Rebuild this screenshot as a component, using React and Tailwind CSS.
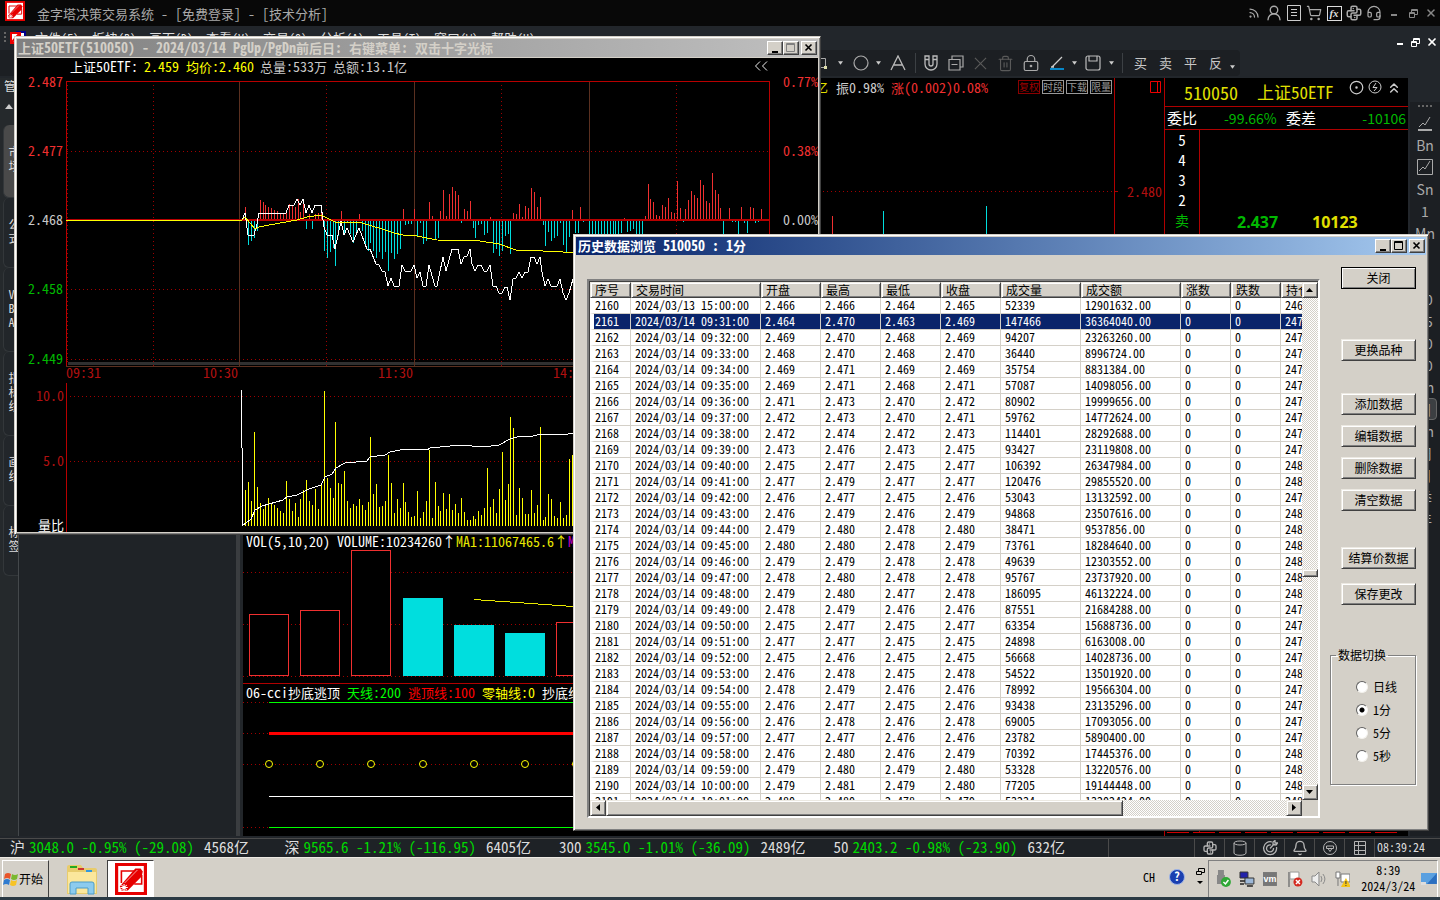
import { Rss, ShoppingCart, Headset, UserRound, CopyMinus, X, Trash2, LockKeyhole, Save, Bell, ChevronsUp, CircleDot } from 'lucide-react';
import { TbBrandPython } from 'react-icons/tb';

const MENUS = ['文件(F)', '板块(B)', '画面(D)', '查看(V)', '交易(O)', '分析(A)', '工具(T)', '窗口(W)', '帮助(H)'];

const SIDE_TABS = [
  { label: '市场', cls: 'h-[73px] bg-[#4a4a4a]' },
  { label: '公式', cls: 'h-[70px] bg-[#22262a]' },
  { label: 'VBA', cls: 'h-[84px] bg-[#22262a]' },
  { label: '指标线', cls: 'h-[84px] bg-[#22262a]' },
  { label: '画线', cls: 'h-[70px] bg-[#22262a]' },
  { label: '标签', cls: 'h-[70px] bg-[#22262a]' },
];

const INDEXES = [
  { name: '沪', value: '3048.0 -0.95% (-29.08)', amount: '4568亿' },
  { name: '深', value: '9565.6 -1.21% (-116.95)', amount: '6405亿' },
  { name: '300', value: '3545.0 -1.01% (-36.09)', amount: '2489亿' },
  { name: '50', value: '2403.2 -0.98% (-23.90)', amount: '632亿' },
];

const COLUMNS = [
  { label: '序号', width: 'w-[41px]' },
  { label: '交易时间', width: 'w-[130px]' },
  { label: '开盘', width: 'w-[60px]' },
  { label: '最高', width: 'w-[60px]' },
  { label: '最低', width: 'w-[60px]' },
  { label: '收盘', width: 'w-[60px]' },
  { label: '成交量', width: 'w-[80px]' },
  { label: '成交额', width: 'w-[100px]' },
  { label: '涨数', width: 'w-[50px]' },
  { label: '跌数', width: 'w-[50px]' },
  { label: '持仓', width: 'w-[80px]' },
];

// time, open, high, low, close, volume, amount, position
const BARS = [
  ['2024/03/13 15:00:00', '2.466', '2.466', '2.464', '2.465', 52339, 12901632, 246],
  ['2024/03/14 09:31:00', '2.464', '2.470', '2.463', '2.469', 147466, 36364040, 247],
  ['2024/03/14 09:32:00', '2.469', '2.470', '2.468', '2.469', 94207, 23263260, 247],
  ['2024/03/14 09:33:00', '2.468', '2.470', '2.468', '2.470', 36440, 8996724, 247],
  ['2024/03/14 09:34:00', '2.469', '2.471', '2.469', '2.469', 35754, 8831384, 247],
  ['2024/03/14 09:35:00', '2.469', '2.471', '2.468', '2.471', 57087, 14098056, 247],
  ['2024/03/14 09:36:00', '2.471', '2.473', '2.470', '2.472', 80902, 19999656, 247],
  ['2024/03/14 09:37:00', '2.472', '2.473', '2.470', '2.471', 59762, 14772624, 247],
  ['2024/03/14 09:38:00', '2.472', '2.474', '2.472', '2.473', 114401, 28292688, 247],
  ['2024/03/14 09:39:00', '2.473', '2.476', '2.473', '2.475', 93427, 23119808, 247],
  ['2024/03/14 09:40:00', '2.475', '2.477', '2.475', '2.477', 106392, 26347984, 248],
  ['2024/03/14 09:41:00', '2.477', '2.479', '2.477', '2.477', 120476, 29855520, 248],
  ['2024/03/14 09:42:00', '2.476', '2.477', '2.475', '2.476', 53043, 13132592, 247],
  ['2024/03/14 09:43:00', '2.476', '2.479', '2.476', '2.479', 94868, 23507616, 248],
  ['2024/03/14 09:44:00', '2.479', '2.480', '2.478', '2.480', 38471, 9537856, 248],
  ['2024/03/14 09:45:00', '2.480', '2.480', '2.478', '2.479', 73761, 18284640, 248],
  ['2024/03/14 09:46:00', '2.479', '2.479', '2.478', '2.478', 49639, 12303552, 248],
  ['2024/03/14 09:47:00', '2.478', '2.480', '2.478', '2.478', 95767, 23737920, 248],
  ['2024/03/14 09:48:00', '2.479', '2.480', '2.477', '2.478', 186095, 46132224, 248],
  ['2024/03/14 09:49:00', '2.478', '2.479', '2.476', '2.476', 87551, 21684288, 247],
  ['2024/03/14 09:50:00', '2.475', '2.477', '2.475', '2.477', 63354, 15688736, 247],
  ['2024/03/14 09:51:00', '2.477', '2.477', '2.475', '2.475', 24898, 6163008, 247],
  ['2024/03/14 09:52:00', '2.475', '2.476', '2.475', '2.475', 56668, 14028736, 247],
  ['2024/03/14 09:53:00', '2.476', '2.478', '2.475', '2.478', 54522, 13501920, 248],
  ['2024/03/14 09:54:00', '2.478', '2.479', '2.476', '2.476', 78992, 19566304, 247],
  ['2024/03/14 09:55:00', '2.476', '2.477', '2.475', '2.476', 93438, 23135296, 247],
  ['2024/03/14 09:56:00', '2.476', '2.478', '2.476', '2.478', 69005, 17093056, 247],
  ['2024/03/14 09:57:00', '2.477', '2.477', '2.476', '2.476', 23782, 5890400, 247],
  ['2024/03/14 09:58:00', '2.476', '2.480', '2.476', '2.479', 70392, 17445376, 248],
  ['2024/03/14 09:59:00', '2.479', '2.480', '2.479', '2.480', 53328, 13220576, 248],
  ['2024/03/14 10:00:00', '2.479', '2.481', '2.479', '2.480', 77205, 19144448, 248],
  ['2024/03/14 10:01:00', '2.480', '2.480', '2.478', '2.479', 53234, 13202424, 248],
];

const FLOW = [
  12, -24, -20, -17, -10, 19, 17, 14, 12, 11, 9, 8, 6, 6, 6, 15, 13, 12, 20, 7, 20, -8, 5, -8, 5, 6, 6, -30, -37, -31,
  -27, -45, -15, 8, -13, -2, -13, -22, -13, 5, -10, -23, -30, -22, -30, -37, -31, -38, -31, -50, -32, -38, -33, -28,
  10, -4, -3, -3, 10, -15, -2, -23, -20, 17, 3, -19, -17, 8, 29, 3, 25, 32, 28, 24, -2, 10, 8, 18, -7, -17, -4, -3,
  -14, -12, 2, -32, -28, -35, -30, -15, -13, -33, 6, 5, 15, 2, 13, 11, 31, 27, 12, 22, -4, -25, -11, -20, -17, -15,
  -2, -24, -31, -16, 9, -12, -12, 12, -1, 0, -16, -16, -16, -16, -16, -16, -16, -16, -16, -16, -16, -12, 1, -11,
  -10, -8, -13, -14, -14, 3, 35, 20, 17, 4, 3, 14, 12, 21, 7, 6, 38, 11, -1, 10, 19, 28, 24, 21, 39, 34, 18, 16, 46,
  29, 25, 11, -14, 0, 11, -1, -1, -13, 12, -2, -12, 12, 11, -2, -1, 10,
];

const VOLUMES = [
  36, 44, 25, 94, 39, 23, 17, 21, 28, 23, 21, 18, 15, 13, 45, 27, 15, 23, 9, 27, 36, 46, 25, 21, 37, 17, 41, 135, 48,
  38, 28, 104, 43, 42, 55, 25, 18, 22, 20, 27, 21, 16, 24, 89, 32, 42, 19, 20, 25, 71, 43, 13, 27, 18, 43, 24, 14, 9,
  10, 35, 8, 14, 25, 76, 8, 44, 20, 15, 33, 17, 32, 16, 22, 13, 28, 14, 6, 6, 10, 7, 15, 11, 18, 58, 19, 27, 13, 37,
  74, 26, 42, 109, 98, 11, 38, 28, 12, 12, 36, 13, 21, 99, 6, 9, 32, 27, 10, 8, 24, 8, 11, 67, 71,
];

const PRICE_LINE =
  '242,220 245,213 248,235 254,235 257,224 259,213 286,213 289,205 294,205 297,199 300,205 303,199 306,213 309,205 312,213 315,205 321,205 324,227 327,235 332,235 335,249 341,221 344,235 347,228 353,242 359,228 367,249 370,249 376,264 379,265 382,271 385,272 388,286 391,278 394,286 399,286 402,265 405,271 411,271 414,265 417,278 420,272 423,286 426,286 429,265 435,286 437,286 443,257 446,271 452,249 458,249 461,264 464,257 467,256 470,249 472,264 475,271 478,265 481,265 484,271 487,271 490,265 493,286 496,286 499,293 502,293 505,287 507,287 510,300 513,279 516,278 519,272 522,278 525,272 528,272 531,257 534,257 537,264 540,257 542,272 545,286 548,279 551,286 557,286 560,279 563,293 566,300 569,293 573,279';
const AVG_LINE =
  '66,220 242,220 245,217 255,229 259,227 280,223 297,220 307,217 321,215 335,222 362,223 382,229 394,233 403,235 417,236 437,240 480,241 499,244 516,250 543,251 563,252 573,253';
const RATIO_LINE =
  '241,390 241,447 242,448 242,526 251,519 255,510 262,506 283,500 287,497 297,495 309,489 321,485 325,477 332,474 336,468 345,463 367,461 370,457 385,455 390,452 405,449 427,450 430,448 440,447 460,445 483,447 499,445 510,439 520,436 528,437 542,434 563,435 573,433';

const barX = (i) => Math.round(245 + i * 2.917);

// Chinese runs are set one pixel smaller than the half-width text around them
function Mixed({ children }) {
  return children.split(/([\u4e00-\u9fff]+)/).map((part, i) =>
    i % 2 ? <span key={i} className="text-[13px]">{part}</span> : part
  );
}

function Logo({ className }) {
  return (
    <svg viewBox="0 0 30 32" preserveAspectRatio="none" className={className}>
      <path d="M0 0h30v32H0z" fill="#e60000" />
      <path d="M3 3h24v26H3z" fill="#fff" />
      <path d="M18 8H6v12M25 12v9h-7" stroke="#e60000" strokeWidth="1.5" fill="none" />
      <path d="M19 5.500h5l2 3-1 5-13 14H6l-1.500-4z" fill="#e60000" />
      <path d="M6 22l5 5M11 22l-5 5M8.500 21v7M5 24.500h7" stroke="#fff" strokeWidth="1" />
      <path d="M9 20l12-13" stroke="#fff" strokeWidth=".6" />
    </svg>
  );
}

function Caret() {
  return (
    <span className="w-[9px] flex justify-center">
      <svg viewBox="0 0 6 4" className="w-[5px] h-[4px]"><path d="M0 0h6L3 4z" fill="#ccc" /></svg>
    </span>
  );
}

function Tool({ children, label, className = 'w-[25px]' }) {
  return (
    <button aria-label={label} className={`${className} h-full flex items-center justify-center text-[#aaa]`}>
      {children}
    </button>
  );
}

function WindowButtons({ dim }) {
  const btn = 'w-4 h-[14px] bg-[#d4d0c8] border border-white border-r-[#404040] border-b-[#404040] shadow-[inset_-1px_-1px_0_#808080] flex items-center justify-center';
  return (
    <div className="flex ml-auto mr-[1px]">
      <button aria-label="最小化" className={btn}>
        <svg viewBox="0 0 12 10" className="w-3 h-[10px]"><path d="M3 8h6v2H3z" /></svg>
      </button>
      <button aria-label="最大化" className={btn}>
        <svg viewBox="0 0 12 10" className="w-3 h-[10px]" fill="none" stroke={dim ? '#808080' : '#000'}>
          <path d="M1.5 .5h8v8h-8zM1.5 1.5h8" />
        </svg>
      </button>
      <button aria-label="关闭" className={`${btn} ml-[2px]`}>
        <svg viewBox="0 0 12 10" className="w-3 h-[10px]" stroke="#000" strokeWidth="1.6"><path d="M2.5 1.5l6 6M8.5 1.5l-6 6" /></svg>
      </button>
    </div>
  );
}

function RestoreIcon({ color }) {
  return (
    <svg viewBox="0 0 9 9" className="w-[9px] h-[9px]" fill="none" stroke={color}>
      <path d="M2.5 3V.5h6v5H6M2.5 1.5h6M.5 3.5h5v5h-5zM.5 4.5h5" />
    </svg>
  );
}

function TitleBar() {
  return (
    <header className="h-[26px] shrink-0 bg-[#080808] flex items-center pl-[5px] pr-[1px] text-[#a8a8a8]">
      <Logo className="w-5 h-5 mb-1" />
      <h1 className="ml-3 whitespace-pre"><Mixed>金字塔决策交易系统 - [免费登录] - [技术分析]</Mixed></h1>
      <div className="ml-auto flex items-center text-[#c0c0c0]">
        <Tool label="订阅" className="w-5"><Rss className="w-3 h-3" strokeWidth={2.5} /></Tool>
        <Tool label="用户" className="w-5"><UserRound className="w-[18px] h-[18px]" strokeWidth={1.8} /></Tool>
        <Tool label="文档" className="w-5">
          <svg viewBox="0 0 14 16" className="w-[14px] h-4" fill="none" stroke="#ccc"><path d="M.5 .5h13v15H.5zM4 4.5h6M4 7.500h6M4 10.5h6" /></svg>
        </Tool>
        <Tool label="购物车" className="w-5"><ShoppingCart className="w-4 h-4" strokeWidth={1.8} /></Tool>
        <Tool label="函数" className="w-5">
          <span className="w-[15px] h-[15px] border border-[#ddd] text-[11px] leading-[12px] text-[#ddd] italic font-bold font-['Liberation_Serif',serif]">fx</span>
        </Tool>
        <Tool label="Python" className="w-5"><TbBrandPython className="w-[18px] h-[18px]" /></Tool>
        <Tool label="客服" className="w-5"><Headset className="w-4 h-4" strokeWidth={1.8} /></Tool>
        <Tool label="最小化" className="w-5"><svg viewBox="0 0 8 8" className="w-2 h-2"><path d="M1 5h6v2H1z" fill="#888" /></svg></Tool>
        <Tool label="还原" className="w-[18px]"><RestoreIcon color="#888" /></Tool>
        <Tool label="关闭" className="w-[17px]"><X className="w-[12px] h-[12px]" strokeWidth={3} color="#888" /></Tool>
      </div>
    </header>
  );
}

function MenuBar() {
  return (
    <nav className="h-6 shrink-0 bg-[#22262b] flex items-center pl-[4px] pr-[1px]">
      <svg viewBox="0 0 28 16" className="w-[28px] h-4 shrink-0">
        <path d="M0 2h2v2H0zM0 6h2v2H0zM0 10h2v2H0z" fill="#666" />
        <path d="M13 2h8v11h-8z" fill="#fff" stroke="#00008b" strokeWidth="2" />
        <path d="M7 3h9v10H7z" fill="#fff" stroke="#e00" strokeWidth="2" />
        <path d="M8 12l7-8" stroke="#e00" strokeWidth="2" />
      </svg>
      {MENUS.map((m) => (
        <button key={m} className="w-[57px] text-left pl-[3px] text-[12px] text-[#ddd] whitespace-nowrap"><Mixed>{m}</Mixed></button>
      ))}
      <div className="ml-auto flex items-center h-full pt-2">
        <Tool label="最小化子窗口" className="w-[14px]"><svg viewBox="0 0 8 8" className="w-2 h-2"><path d="M1 5h6v2H1z" fill="#fff" /></svg></Tool>
        <Tool label="还原子窗口" className="w-[17px]"><RestoreIcon color="#fff" /></Tool>
        <Tool label="关闭子窗口" className="w-[15px]"><X className="w-[12px] h-[12px]" strokeWidth={3.5} color="#fff" /></Tool>
      </div>
    </nav>
  );
}

function Toolbar() {
  const sep = <span className="w-px h-5 bg-[#3c4044]" />;
  return (
    <div className="h-7 shrink-0 bg-[#22262b] flex">
      <div className="h-[26px] bg-[#1c1f23] rounded-r flex items-center pl-[810px] pr-[3px]">
        <Tool label="矩形" className="w-[22px]">
          <svg viewBox="0 0 14 12" className="w-[14px] h-3" fill="none" stroke="#aaa"><path d="M.5 1.5h11v9H.5z" /><path d="M10 9h3v3h-3z" fill="#dda" stroke="none" /></svg>
        </Tool>
        <span className="w-[4px]" /><Caret /><span className="w-[2px]" />
        <Tool label="圆形" className="w-[27px]"><svg viewBox="0 0 16 16" className="w-4 h-4" fill="none" stroke="#aaa" strokeWidth="1.2"><circle cx="8" cy="8" r="7" /></svg></Tool>
        <Caret />
        <Tool label="文字" className="w-[30px]"><svg viewBox="0 0 16 16" className="w-4 h-4" fill="none" stroke="#bbb" strokeWidth="1.3"><path d="M1 15L8 1l7 14M4 10h8" /></svg></Tool>
        <span className="w-[5px] flex justify-center">{sep}</span>
        <Tool label="磁吸">
          <svg viewBox="0 0 14 16" className="w-[14px] h-4" fill="none" stroke="#bbb" strokeWidth="1.3"><path d="M1 1h4v8a2 2 0 0 0 4 0V1h4v8a6 6 0 0 1-12 0zM1 4.5h4M9 4.5h4" /></svg>
        </Tool>
        <Tool label="复制">
          <svg viewBox="0 0 16 16" className="w-4 h-4" fill="none" stroke="#aaa" strokeWidth="1.2"><path d="M4 4V1h11v11h-3M1 4.5h11V15H1zM3.5 9.500h6" /></svg>
        </Tool>
        <Tool label="删除"><svg viewBox="0 0 14 14" className="w-[13px] h-[13px]" stroke="#5a5a5a" strokeWidth="1.2"><path d="M1 1l12 12M13 1L1 13" /></svg></Tool>
        <Tool label="清空"><Trash2 className="w-[17px] h-[17px]" strokeWidth={1.6} color="#5a5a5a" /></Tool>
        <Tool label="锁定"><LockKeyhole className="w-[18px] h-[18px]" strokeWidth={1.6} /></Tool>
        <Tool label="线型" className="w-[27px]"><svg viewBox="0 0 16 16" className="w-4 h-4" fill="none"><path d="M3 12L13 2M2 12h3" stroke="#ccc" strokeWidth="1.3" /><path d="M1 14h14" stroke="#0af" strokeWidth="1.5" /></svg></Tool>
        <Caret />
        <Tool label="保存" className="w-[28px]">
          <svg viewBox="0 0 16 16" className="w-4 h-4" fill="none" stroke="#bbb" strokeWidth="1.2"><rect x="1" y="1" width="14" height="14" rx="2" /><path d="M4 1v5h8V1" /></svg>
        </Tool>
        <Caret />
        <span className="w-[12px] flex justify-center">{sep}</span>
        {['买', '卖', '平', '反'].map((t) => (
          <Tool key={t} label={t}><span className="text-[13px] text-[#c8c8c8]">{t}</span></Tool>
        ))}
        <span className="pt-[8px]"><Caret /></span>
      </div>
    </div>
  );
}

function SideTabs() {
  return (
    <aside className="w-[18px] shrink-0 bg-[#25292c] text-[#ddd] text-[12px] leading-[14px] overflow-hidden">
      <div className="h-[47px] pl-1 pt-[1px]">
        管
        <svg viewBox="0 0 8 5" className="w-2 h-[5px] mt-[11px] ml-px"><path d="M0 5h8L4 0z" fill="#ccc" /></svg>
      </div>
      {SIDE_TABS.map((t) => (
        <button key={t.label} className={`${t.cls} w-[18px] ml-[3px] rounded-l-md border-l border-b border-[#33373a] flex flex-col items-center justify-center pb-1 pl-1`}>
          {t.label.split('').map((c, i) => <span key={i} className="w-3 text-left">{c}</span>)}
        </button>
      ))}
    </aside>
  );
}

function MainChart() {
  const badge = 'w-[22px] h-[14px] border text-[10px] leading-[12px] text-center';
  return (
    <section className="flex-1 min-w-0 bg-black flex flex-col overflow-hidden">
      <div className="flex-1 min-h-0 flex">
        <div className="flex-1 min-w-0 flex flex-col border-r border-[#b00000]">
          <div className="h-[18px] shrink-0 flex items-center justify-end pr-[2px] whitespace-nowrap">
            <span className="text-[#e0e000] mr-[8px] text-[13px]">亿</span>
            <span className="text-[#ccc] mr-[7px]"><Mixed>振0.98%</Mixed></span>
            <span className="text-[#f03030] mr-[30px]"><Mixed>涨(0.002)0.08%</Mixed></span>
            <div className="flex gap-[2px] text-[#999]">
              <button className={`${badge} border-[#8b0000] text-[#a00000]`}>复权</button>
              <button className={`${badge} border-[#999]`}>时段</button>
              <button className={`${badge} border-[#999]`}>下载</button>
              <button className={`${badge} border-[#999]`}>限量</button>
            </div>
          </div>
          <svg className="w-full flex-1 min-h-0" viewBox="243 96 871 440" preserveAspectRatio="xMaxYMin slice" shapeRendering="crispEdges">
            <path d="M243 191.500h871" stroke="#a00000" strokeDasharray="1 3" />
            <path d="M832.500 216v50" stroke="#f03030" />
            <path d="M883.500 211v50M986.500 206v50" stroke="#00dede" />
          </svg>
        </div>
        <div className="w-[49px] shrink-0 flex flex-col items-end text-[#b01010] pr-[2px]">
          <svg viewBox="0 0 12 12" className="w-3 h-3 mt-[3px]" fill="none" stroke="#e00"><path d="M.5 .5h10v11H.5zM7.500 0v12" /></svg>
          <span className="mt-[88px] leading-[20px] w-full text-right relative before:absolute before:left-0 before:top-[10px] before:w-[3px] before:h-px before:bg-[#b00000]">2.480</span>
        </div>
      </div>

      <div className="h-[148px] shrink-0 border-b border-[#b00000] flex flex-col">
        <div className="h-[12px] shrink-0 pl-[3px] leading-[10px] whitespace-pre text-white flex">
          <span className="w-[91px]">VOL(5,10,20)</span><span>VOLUME:10234260↑</span>
          <span className="text-[#e8e800]">MA1:11067465.6↑</span><span className="text-[#d000d0]">MA2:10922043.3↑</span>
        </div>
        <svg className="w-full flex-1 min-h-0" viewBox="243 548 921 135" preserveAspectRatio="xMinYMin slice" shapeRendering="crispEdges">
          <path d="M243 572.500h921M243 624.500h921M243 676.500h921" stroke="#a00000" strokeDasharray="1 3" />
          <g fill="#000" stroke="#f03030">
            <path d="M249.500 614.500h39v61h-39zM300.500 610.500h39v65h-39zM351.500 550.500h39v125h-39zM556.500 622.500h39v53h-39z" />
          </g>
          <path d="M403 598h40v78h-40zM454 625h40v51h-40zM505 633h40v43h-40z" fill="#00dede" />
          <path d="M474 599.500L573 606.500" stroke="#e8e800" fill="none" />
        </svg>
      </div>

      <div className="h-[152px] shrink-0 flex flex-col">
        <div className="h-[17px] shrink-0 pl-[3px] leading-[17px] flex gap-[7px] whitespace-nowrap text-white">
          <span><Mixed>06-cci抄底逃顶</Mixed></span>
          <span className="text-[#0f0]"><Mixed>天线:200</Mixed></span>
          <span className="text-[#f00]"><Mixed>逃顶线:100</Mixed></span>
          <span className="text-[#ff0]"><Mixed>零轴线:0</Mixed></span>
          <span><Mixed>抄底线:-100</Mixed></span>
        </div>
        <svg className="w-full flex-1 min-h-0" viewBox="243 701 921 135" preserveAspectRatio="xMinYMin slice" shapeRendering="crispEdges">
          <path d="M243 702.500h26M243 733.500h26M243 764.500h921M243 827.500h26" stroke="#a00000" strokeDasharray="1 3" />
          <path d="M269 702.500h895M269 827.500h895" stroke="#0f0" />
          <path d="M269 733.500h895" stroke="#f00" strokeWidth="3" />
          <path d="M269 796.500h895" stroke="#fff" />
          {[269, 320, 371, 423, 474, 525, 576].map((x) => (
            <circle key={x} cx={x} cy="764" r="3.5" fill="#000" stroke="#ff0" shapeRendering="auto" />
          ))}
        </svg>
      </div>
    </section>
  );
}

function QuotePanel() {
  return (
    <section className="w-[244px] shrink-0 bg-black border-l border-[#b00000] flex flex-col">
      <div className="h-[29px] flex items-center pl-[19px] pr-[6px] text-[#e0e000] text-[17px] border-b border-[#b00000]">
        <span className="text-[18px]">510050</span>
        <span className="ml-[19px]">上证50ETF</span>
        <span className="ml-auto flex gap-[4px] pb-2 text-[#ccc]">
          <CircleDot className="w-[15px] h-[15px]" strokeWidth={2} />
          <svg viewBox="0 0 14 14" className="w-[14px] h-[14px]" fill="none" stroke="#ccc"><circle cx="7" cy="7" r="6" /><path d="M8 3L5 7.500h4L6 11" /></svg>
          <ChevronsUp className="w-[16px] h-[16px]" strokeWidth={2.2} />
        </span>
      </div>
      <div className="h-[23px] flex items-center pl-[2px] pr-[2px] text-[14px] text-white border-b border-[#b00000]">
        <span className="w-[57px] text-[15px]">委比</span>
        <span className="text-[#00b800] w-[62px] [font-feature-settings:normal]">-99.66%</span>
        <span className="text-[15px]">委差</span>
        <span className="text-[#00b800] ml-auto [font-feature-settings:normal]">-10106</span>
      </div>
      <div className="flex flex-1">
        <ol className="w-[35px] border-r border-[#b00000] text-white text-center text-[15px] leading-[20px]">
          <li>5</li><li>4</li><li>3</li><li>2</li><li className="text-[#00b800] text-[14px]">卖</li>
        </ol>
        <p className="flex-1 pt-[82px] text-[16px] leading-[20px] font-bold font-['Noto_Sans',sans-serif]">
          <span className="inline-block w-[112px] pl-[37px] text-[#00b800]">2.437</span>
          <span className="text-[#e0e000]">10123</span>
        </p>
      </div>
      <div className="flex gap-[4px] pl-[2px] pb-[3px]">
        {Array.from({ length: 9 }, (_, i) => <span key={i} className="w-[22px] h-px bg-[#d00000]" />)}
      </div>
    </section>
  );
}

function PeriodBar() {
  const item = 'h-[22px] w-full shrink-0 flex items-center justify-center';
  const line = <path d="M2 12l4-4 2 2 5-8" />;
  return (
    <aside className="w-8 shrink-0 bg-[#22262b] pl-[2px] overflow-hidden">
      <div className="mt-[24px] bg-[#1c1f23] text-[#aaa] text-[14px] flex flex-col items-center h-full [font-feature-settings:normal]">
        <svg viewBox="0 0 14 2" className="w-[14px] h-[2px] mt-[3px] mb-[5px] shrink-0"><path d="M0 0h2v2H0zM4 0h2v2H4zM8 0h2v2H8zM12 0h2v2h-2z" fill="#666" /></svg>
        <button aria-label="分时" className={item}><svg viewBox="0 0 16 16" className="w-4 h-4" fill="none" stroke="#aaa">{line}<path d="M1 15h14" strokeWidth="2" /></svg></button>
        <button className={item}>Bn</button>
        <button aria-label="K线" className={item}><svg viewBox="0 0 16 16" className="w-4 h-4" fill="none" stroke="#aaa"><path d="M.5 .5h15v15H.5z" />{line}</svg></button>
        {['Sn', '1', 'Mn', '3', '5', '10', '15', '30', '60', 'Hn'].map((t) => <button key={t} className={item}>{t}</button>)}
        <button className="w-6 h-[22px] shrink-0 rounded border border-[#666] bg-[#3c3f42]">日</button>
        {['Dn', '周', '月', '季', '年'].map((t) => <button key={t} className={item}>{t}</button>)}
      </div>
    </aside>
  );
}

function CylinderIcon({ className }) {
  return (
    <svg viewBox="0 0 16 16" className={className} fill="none" stroke="currentColor">
      <ellipse cx="8" cy="3" rx="6" ry="2" /><path d="M2 3v10c0 3 12 3 12 0V3" />
    </svg>
  );
}

function TargetIcon({ className }) {
  return (
    <svg viewBox="0 0 16 16" className={className} fill="none" stroke="currentColor" strokeWidth="1.3">
      <path d="M10 2a6.500 6.500 0 1 0 4.500 5M9 5a3.500 3.500 0 1 0 2.500 3M8 8.500L12 4M11 4.500V2l2-1.500V3h2.500L14 5z" />
    </svg>
  );
}

function TrayIcon({ className }) {
  return (
    <svg viewBox="0 0 16 16" className={className} fill="none" stroke="currentColor">
      <circle cx="8" cy="8" r="6.5" /><path d="M4.500 6h7v2.500h-7zM6 8.500l2 3 2-3" />
    </svg>
  );
}

function RackIcon({ className }) {
  return (
    <svg viewBox="0 0 16 16" className={className} fill="none" stroke="currentColor">
      <path d="M2.500 1.500h11v13h-11zM2.500 5.500h11M2.500 10.500h11M6.500 1.500v13" />
    </svg>
  );
}

function StatusBar() {
  return (
    <footer className="h-[19px] shrink-0 bg-[#1e2226] border-t border-[#4a4a4a] flex items-stretch text-[15px] leading-[16px] text-[#ddd] whitespace-nowrap pl-[10px]">
      {INDEXES.map((x) => (
        <div key={x.name} className="w-[275px] flex gap-1">
          <span>{x.name}</span>
          <span className="text-[#00d800] whitespace-pre">{x.value}</span>
          <span className="ml-[6px]">{x.amount}</span>
        </div>
      ))}
      <div className="ml-auto flex">
        <span className="w-[86px] border-l border-[#4a4a4a]" />
        {[TbBrandPython, CylinderIcon, TargetIcon, Bell, TrayIcon, RackIcon].map((Icon, i) => (
          <span key={i} className="w-[30px] border-l border-[#4a4a4a] flex items-center justify-center text-[#b4b4b4]">
            <Icon className="w-4 h-4" />
          </span>
        ))}
        <time className="w-[66px] border-l border-[#4a4a4a] pl-[2px] text-[12px]">08:39:24</time>
      </div>
    </footer>
  );
}

function Taskbar() {
  return (
    <div className="h-[40px] shrink-0 bg-[#d4d0c8] border-t border-[#ece9e2] flex items-stretch pt-[2px] pl-[2px] pr-[2px] text-black text-[12px]">
      <button className="w-[47px] border border-white border-r-[#404040] border-b-0 flex items-center">
        <svg viewBox="0 0 16 16" className="w-4 h-4">
          <path d="M2 3q3-2 6 0L7 8Q4 6 1 8z" fill="#e8552a" /><path d="M9 3q3 2 6 0l-1 5q-3 2-6 0z" fill="#7ab82e" />
          <path d="M1 9q3-2 6 0l-1 5q-3-2-6 0z" fill="#2f7bd0" /><path d="M8 9q3 2 6 0l-1 5q-3 2-6 0z" fill="#f7c325" />
        </svg>
        开始
      </button>
      <button aria-label="资源管理器" className="ml-[16px] w-[34px] flex items-center justify-center">
        <svg viewBox="0 0 34 32" className="w-[34px] h-8">
          <path d="M2 4q0-2 2-2h12l2 3h12q2 0 2 2v24H2z" fill="#e8cc6c" /><path d="M3 9h28v21H3z" fill="#fbe79c" />
          <path d="M5 3h7v2H5z" fill="#2a2" /><path d="M13 5h6v2h-6z" fill="#c33" /><path d="M21 7h6v2h-6z" fill="#39d" />
          <path d="M5 31V21q0-2 2-2h20q2 0 2 2v10h-6v-6H11v6z" fill="#8ccbee" stroke="#4c9cc8" />
        </svg>
      </button>
      <button aria-label="金字塔决策交易系统" className="ml-[8px] w-[47px] bg-white border border-[#404040] border-r-white border-b-0 flex items-center justify-center">
        <Logo className="w-8 h-8" />
      </button>
      <div className="ml-auto flex items-center">
        <span className="mr-[14px] pb-1">CH</span>
        <svg viewBox="0 0 16 16" className="w-4 h-4 mr-[11px] mb-1">
          <circle cx="8" cy="8" r="7.500" fill="#1a3fb0" stroke="#9db4e8" />
          <text x="8" y="12" textAnchor="middle" fontSize="12" fontWeight="700" fill="#fff">?</text>
        </svg>
        <svg viewBox="0 0 9 17" className="w-[9px] h-[17px] mr-[3px] mb-1"><path d="M2.500 3V.5h6v4H6M.5 3.500h5v3h-5z" fill="none" stroke="#000" /><path d="M1 13h6l-3 3z" /></svg>
      </div>
      <div className="w-[230px] border border-[#808080] border-r-white border-b-0 flex items-center pl-[5px]">
        <svg viewBox="0 0 18 18" className="w-[18px] h-[18px]"><path d="M4 0h6v5H4zM3 5h8v9H3z" fill="#888" /><circle cx="12" cy="12" r="5" fill="#2fa836" /><path d="M9.500 12l2 2 3-4" stroke="#fff" strokeWidth="1.5" fill="none" /></svg>
        <svg viewBox="0 0 16 16" className="w-4 h-4 ml-[7px]"><path d="M1 1h8v6H1z" fill="#22a" stroke="#333" /><path d="M6 7h9v6H6z" fill="#9db8d8" stroke="#333" /><path d="M1 10h5M1 13h4M8 15h6" stroke="#222" strokeWidth="1.5" /></svg>
        <svg viewBox="0 0 14 14" className="w-[14px] h-[14px] ml-[8px]"><rect width="14" height="14" fill="#777" /><text x="7" y="10" textAnchor="middle" fontSize="9" fontWeight="700" fill="#fff" className="font-['Liberation_Sans',sans-serif]">vm</text></svg>
        <svg viewBox="0 0 16 16" className="w-4 h-4 ml-[10px]"><path d="M2 1v15" stroke="#777" strokeWidth="1.5" /><path d="M3 1h9v7H3z" fill="#fff" stroke="#999" /><circle cx="11" cy="11" r="4.500" fill="#d42a20" /><path d="M9 9l4 4M13 9l-4 4" stroke="#fff" strokeWidth="1.5" /></svg>
        <svg viewBox="0 0 16 16" className="w-4 h-4 ml-[8px]" fill="none" stroke="#888"><path d="M1 5h3l4-4v14l-4-4H1z" fill="#eee" /><path d="M10 5q2 3 0 6M12 3q4 5 0 10" /></svg>
        <svg viewBox="0 0 16 16" className="w-4 h-4 ml-[8px]"><path d="M1 1h4v6H1zM3 7v8M6 3h9v8H6z" fill="#fff" stroke="#777" /><path d="M11 7l5 9H6z" fill="#f5c518" /><path d="M11 10v3M11 14v1" stroke="#333" /></svg>
        <div className="ml-[6px] w-[64px] text-center leading-[16px] pb-[2px]">8:39<br />2024/3/24</div>
        <svg viewBox="0 0 16 12" className="w-4 h-3 ml-[1px]"><path d="M0 0h16v11H0z" fill="#2a6fc0" /><path d="M0 0h16L6 11H0z" fill="#5aa0e0" /><path d="M0 9h5v3H0z" fill="#ddd" /></svg>
      </div>
    </div>
  );
}

const FRAME = 'absolute bg-[#d4d0c8] border border-[#d4d0c8] border-r-[#404040] border-b-[#404040] shadow-[inset_1px_1px_0_#fff,inset_-1px_-1px_0_#808080] p-[2px] flex flex-col';

function IntradayWindow() {
  const row = (y, left, leftColor, right) => (
    <g key={y} fill={leftColor}>
      <text x="28" y={y + 4}>{left}</text>
      {right && <text x="783" y={y + 4}>{right}</text>}
    </g>
  );
  return (
    <section className={`${FRAME} left-[14px] top-[36px] w-[807px] h-[499px]`}>
      <div className="h-[18px] shrink-0 flex items-center bg-linear-to-r from-[#808080] to-[#c0c0c0] text-[#d4d0c8] font-bold whitespace-pre pl-[1px] leading-[14px]">
        <h2 className="pb-[2px]"><Mixed>上证50ETF(510050) - 2024/03/14 PgUp/PgDn前后日: 右键菜单: 双击十字光标</Mixed></h2>
        <WindowButtons dim />
      </div>
      <div className="mt-px flex-1 min-h-0 bg-black flex flex-col">
        <div className="h-[18px] shrink-0 pl-[53px] pb-[2px] flex items-center whitespace-pre text-[#c8c8c8]">
          <span className="text-white w-[74px]"><Mixed>上证50ETF:</Mixed></span>
          <span className="text-[#ff0] w-[42px]">2.459</span>
          <span className="text-[#ff0] w-[74px]"><Mixed>均价:2.460</Mixed></span>
          <span className="w-[73px]"><Mixed>总量:533万</Mixed></span>
          <span><Mixed>总额:13.1亿</Mixed></span>
          <button aria-label="收起" className="ml-auto mr-[50px]">
            <svg viewBox="0 0 14 10" className="w-[14px] h-[10px]" fill="none" stroke="#eee"><path d="M6 .5L1.500 5 6 9.500M13 .5L8.500 5l4.500 4.500" /></svg>
          </button>
        </div>
        <svg className="w-full flex-1 min-h-0" viewBox="17 76 801 456" preserveAspectRatio="xMinYMin slice" shapeRendering="crispEdges">
          <g stroke="#a00000" strokeDasharray="1 3">
            <path d="M67 151.500h702M67 289.500h702M67 359.500h702M70 396.500h748M70 461.500h748" />
            <path d="M67.500 85v280M153.500 85v281M326.500 85v281M501.500 85v281M676.500 85v281" />
          </g>
          <path d="M68 362h750v3H68z" fill="#303030" />
          <path d="M239.500 82v284M414.500 82v284M589.500 82v284M66 366.500h752" stroke="#5a3020" />
          <path d="M66.500 366V81.500h703V366M66.500 383v149" fill="none" stroke="#b80000" />
          {FLOW.map((v, i) => (
            <path key={i} d={`M${barX(i)}.5 ${v > 0 ? 219 : 221}v${-v}`} stroke={v > 0 ? '#f03030' : '#00dede'} />
          ))}
          <path d="M66 220h704" stroke="#b80000" strokeWidth="2" />
          <path d={VOLUMES.map((v, i) => `M${barX(i)}.5 526v${-v}`).join('')} stroke="#ff0" />
          <polyline points={PRICE_LINE} fill="none" stroke="#fff" />
          <polyline points={AVG_LINE} fill="none" stroke="#ff0" />
          <polyline points={RATIO_LINE} fill="none" stroke="#fff" />
          <g fontSize="14">
            {row(83, '2.487', '#f03030', '0.77%')}
            {row(152, '2.477', '#f03030', '0.38%')}
            {row(221, '2.468', '#c8c8c8', '0.00%')}
            {row(290, '2.458', '#00b800')}
            {row(360, '2.449', '#00b800')}
            <g fill="#b01010">
              <text x="66" y="378">09:31</text>
              <text x="203" y="378">10:30</text>
              <text x="378" y="378">11:30</text>
              <text x="553" y="378">14:00</text>
              <text x="36" y="401">10.0</text>
              <text x="43" y="466">5.0</text>
            </g>
            <text x="38" y="530" fill="#fff" fontSize="13">量比</text>
          </g>
        </svg>
      </div>
    </section>
  );
}

const TRACK = 'bg-[repeating-conic-gradient(#fff_0_25%,#d4d0c8_0_50%)] bg-[length:2px_2px]';
const RAISED = 'bg-[#d4d0c8] border border-[#ece9e2] border-r-[#404040] border-b-[#404040] shadow-[inset_1px_1px_0_#fff,inset_-1px_-1px_0_#808080]';

function ScrollButton({ label, d }) {
  return (
    <button aria-label={label} className={`${RAISED} w-4 h-4 shrink-0 flex items-center justify-center`}>
      <svg viewBox="0 0 8 8" className="w-2 h-2"><path d={d} /></svg>
    </button>
  );
}

function HistoryTable() {
  return (
    <table className="table-fixed border-separate border-spacing-0 w-[771px] text-[12px] bg-white text-black">
      <thead>
        <tr>
          {COLUMNS.map((c) => (
            <th key={c.label} className={`${c.width} h-4 p-0 pl-[4px] text-left font-normal leading-[14px] ${RAISED}`}>{c.label}</th>
          ))}
        </tr>
      </thead>
      <tbody>
        {BARS.map(([time, open, high, low, close, volume, amount, position], i) => {
          const selected = i === 1;
          const cells = [2160 + i, time, open, high, low, close, volume, `${amount}.00`, 0, 0, position];
          return (
            <tr key={time} className={selected ? 'bg-[#0a246a] text-white' : ''}>
              {cells.map((v, c) => (
                <td
                  key={c}
                  className={`h-4 p-0 align-top leading-[14px] border-b border-r border-[#d4d0c8] whitespace-pre ${c === 0 ? 'border-l-4 border-l-white pl-px' : 'pl-[4px]'}`}
                >
                  {v}
                </td>
              ))}
            </tr>
          );
        })}
      </tbody>
    </table>
  );
}

function HistoryDialog() {
  const btn = `${RAISED} w-[75px] h-[22px] text-[12px] leading-[18px]`;
  return (
    <section role="dialog" aria-label="历史数据浏览" className={`${FRAME} left-[573px] top-[234px] w-[856px] h-[597px] text-black`}>
      <div className="h-[18px] shrink-0 flex items-center bg-linear-to-r from-[#0a246a] to-[#a6caf0] text-white font-bold whitespace-pre pl-[2px] leading-[14px]">
        <h2 className="pb-[2px]"><Mixed>历史数据浏览 510050 : 1分</Mixed></h2>
        <WindowButtons />
      </div>
      <div className="flex-1 min-h-0 flex pl-[11px] pr-[9px]">
        <div className="flex-1 min-w-0 mt-6 mb-[10px] border-2 border-[#808080] border-r-white border-b-white">
          <div className="w-full h-full border-l border-t border-[#404040] flex flex-col">
            <div className="flex flex-1 min-h-0">
              <div className="flex-1 min-w-0 overflow-hidden bg-white"><HistoryTable /></div>
              <div className={`w-4 flex flex-col ${TRACK}`}>
                <ScrollButton label="向上" d="M0 6h7L3.500 2z" />
                <div className="flex-1" />
                <div className={`${RAISED} h-2`} />
                <div className="h-[207px]" />
                <ScrollButton label="向下" d="M0 2h7L3.500 6z" />
              </div>
            </div>
            <div className="h-4 flex bg-[#d4d0c8]">
              <ScrollButton label="向左" d="M6 0v7L2 3.500z" />
              <div className={`flex-1 flex ${TRACK}`}><div className={`${RAISED} w-[517px]`} /></div>
              <ScrollButton label="向右" d="M2 0v7l4-3.500z" />
              <div className="w-4" />
            </div>
          </div>
        </div>
        <div className="w-[86px] ml-[11px] shrink-0 pt-[12px] flex flex-col items-end pr-[1px]">
          <button className={`${btn} outline-1 outline-black -outline-offset-1`}>关闭</button>
          <button className={`${btn} mt-[50px]`}>更换品种</button>
          <div className="mt-8 flex flex-col gap-[10px]">
            <button className={btn}>添加数据</button>
            <button className={btn}>编辑数据</button>
            <button className={btn}>删除数据</button>
            <button className={btn}>清空数据</button>
          </div>
          <button className={`${btn} mt-9`}>结算价数据</button>
          <button className={`${btn} mt-[14px]`}>保存更改</button>
          <fieldset className="mt-[43px] w-[86px] h-[137px] border border-[#808080] shadow-[1px_1px_0_#fff,inset_1px_1px_0_#fff] text-[12px] leading-[14px]">
            <legend className="ml-[5px] px-[2px]">数据切换</legend>
            <div className="pt-[18px] pl-[25px] flex flex-col gap-[9px]">
              {['日线', '1分', '5分', '5秒'].map((p) => (
                <label key={p} className="flex items-center gap-[5px]">
                  <input
                    type="radio"
                    name="period"
                    defaultChecked={p === '1分'}
                    className="appearance-none w-3 h-3 rounded-full bg-white border border-[#606060] border-r-[#f4f2ee] border-b-[#f4f2ee] checked:bg-[radial-gradient(#000_2px,#fff_3px)]"
                  />
                  {p}
                </label>
              ))}
            </div>
          </fieldset>
        </div>
      </div>
    </section>
  );
}

export default function App() {
  return (
    <div className="relative w-full h-screen overflow-hidden flex flex-col bg-[#2b3a44] font-['Noto_Sans_CJK_SC',sans-serif] [font-feature-settings:'hwid'] text-[14px] leading-[16px]">
      <TitleBar />
      <MenuBar />
      <Toolbar />
      <main className="flex-1 min-h-0 flex bg-[#1f2327]">
        <SideTabs />
        <div className="w-[218px] shrink-0 border-l border-[#44484b] bg-[#1f2327]" />
        <div className="w-[7px] shrink-0 border-l-4 border-[#3a3d40] bg-[#22262a]" />
        <MainChart />
        <QuotePanel />
        <PeriodBar />
      </main>
      <div className="h-[2px] shrink-0 bg-[#22262b]" />
      <StatusBar />
      <Taskbar />
      <div className="h-[3px] shrink-0" />
      <IntradayWindow />
      <HistoryDialog />
    </div>
  );
}
